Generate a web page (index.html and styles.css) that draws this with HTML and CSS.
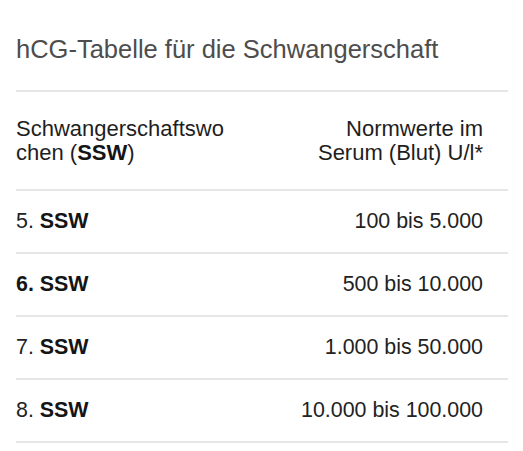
FILE: index.html
```
<!DOCTYPE html>
<html lang="de">
<head>
<meta charset="utf-8">
<title>hCG-Tabelle</title>
<link rel="stylesheet" href="styles.css">
</head>
<body>
<div class="card">
  <h1 class="title">hCG-Tabelle für die Schwangerschaft</h1>
  <table class="hcg">
    <thead>
      <tr class="head-row">
        <th class="col-week"><span class="wrap-left">Schwangerschaftswo<wbr>chen (<b>SSW</b>)</span></th>
        <th class="col-value"><span class="wrap-right">Normwerte im Serum (Blut) U/l*</span></th>
      </tr>
    </thead>
    <tbody>
      <tr><td class="col-week">5. <b>SSW</b></td><td class="col-value">100 bis 5.000</td></tr>
      <tr><td class="col-week"><b>6. SSW</b></td><td class="col-value">500 bis 10.000</td></tr>
      <tr><td class="col-week">7. <b>SSW</b></td><td class="col-value">1.000 bis 50.000</td></tr>
      <tr><td class="col-week">8. <b>SSW</b></td><td class="col-value">10.000 bis 100.000</td></tr>
    </tbody>
  </table>
</div>
</body>
</html>
```
FILE: styles.css
```
html, body {
  margin: 0;
  padding: 0;
  background: #ffffff;
}
body {
  font-family: "Liberation Sans", Arial, Helvetica, sans-serif;
  color: #1e1e1e;
}
.card {
  padding: 34px 15px 0 16px;
}
.title {
  margin: 0 0 26px;
  font-size: 25.5px;
  line-height: 30px;
  font-weight: normal;
  color: #4d4d4d;
}
.hcg {
  width: 492px;
  border-collapse: collapse;
  border-top: 2px solid #e6e6e6;
}
.hcg tr {
  border-bottom: 2px solid #e6e6e6;
}
.hcg th,
.hcg td {
  padding: 0;
  vertical-align: top;
}
.head-row th {
  font-size: 22px;
  line-height: 24px;
  font-weight: normal;
  color: #1e1e1e;
  padding-top: 25px;
  padding-bottom: 24px;
}
.hcg b {
  font-weight: bold;
  color: #151515;
}
.col-week {
  text-align: left;
  width: 214px;
}
.col-value {
  text-align: right;
  padding-right: 25px !important;
}
.wrap-left {
  display: block;
  width: 214px;
}
.wrap-right {
  display: block;
  max-width: 180px;
  margin-left: auto;
}
.hcg td {
  font-size: 21.4px;
  line-height: 25px;
  padding-top: 18px;
  padding-bottom: 18px;
  color: #222222;
}
```
